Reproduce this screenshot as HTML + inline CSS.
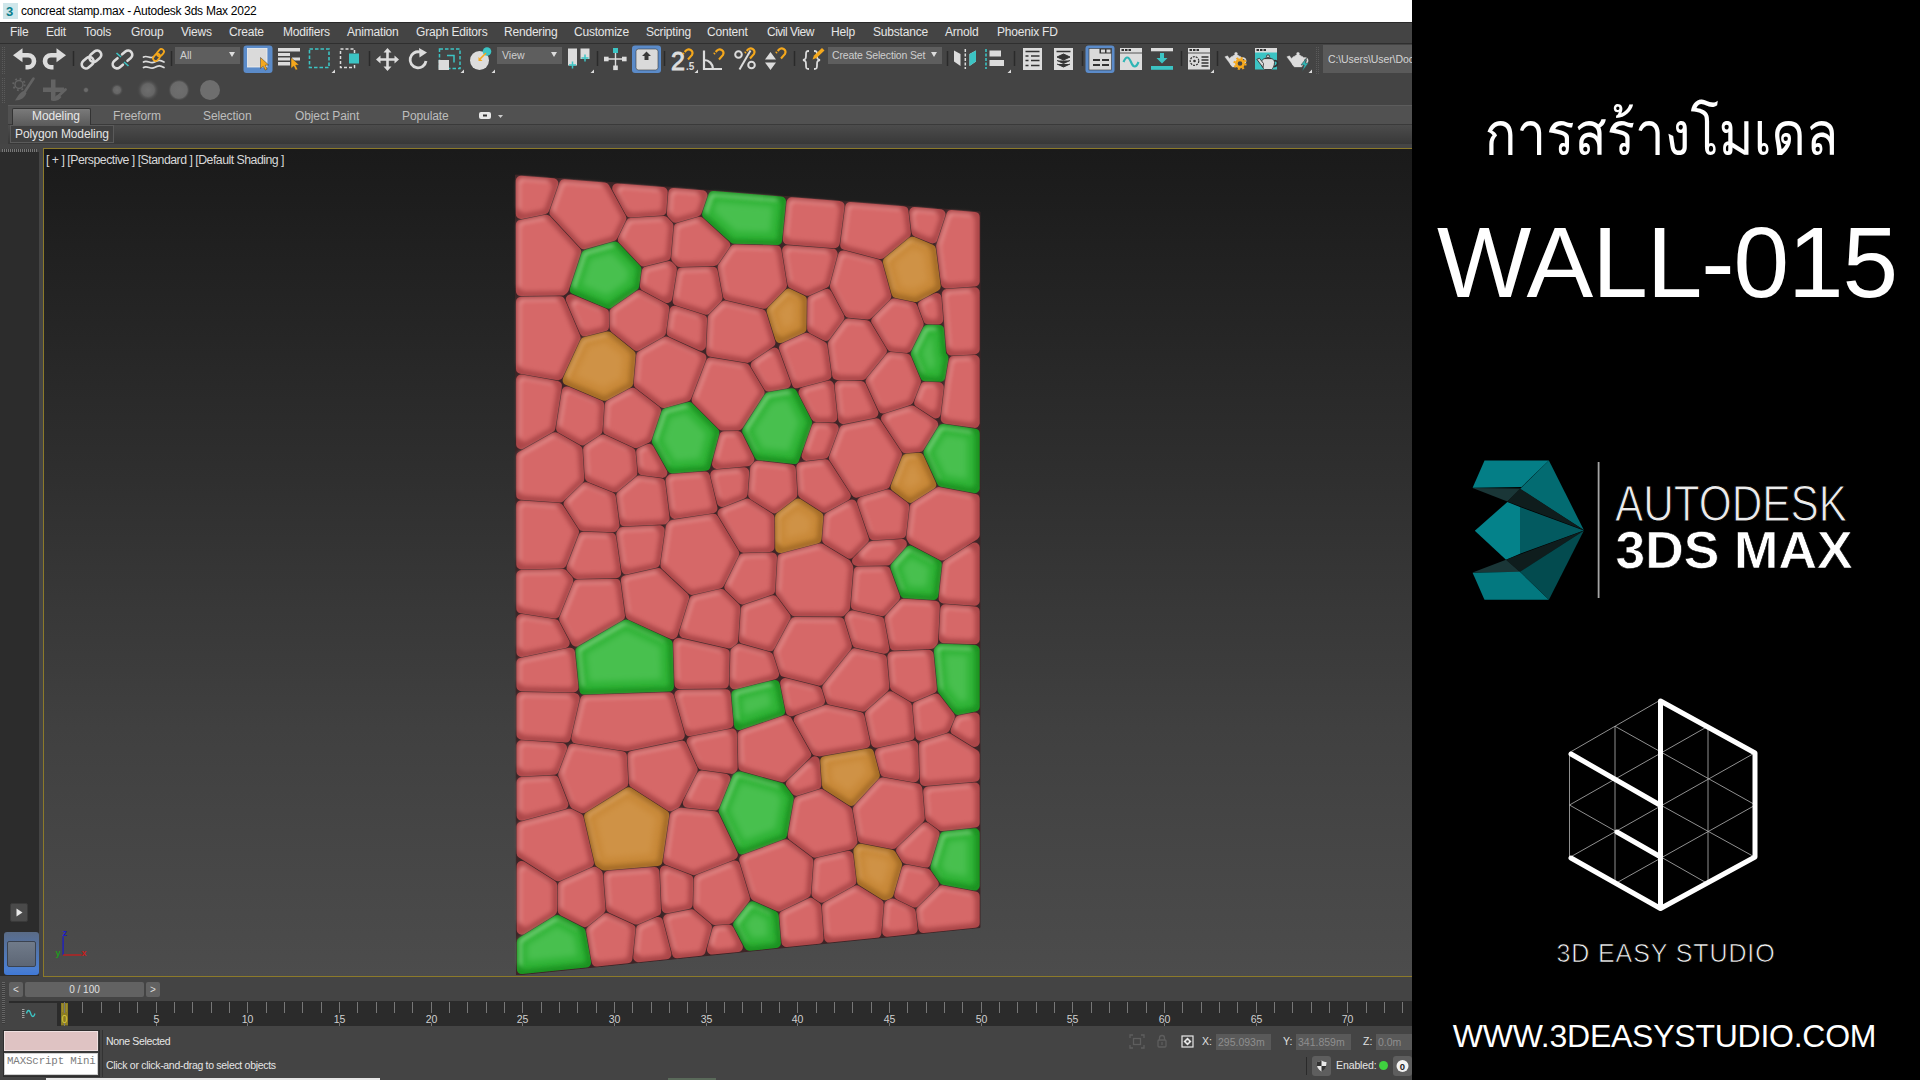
<!DOCTYPE html>
<html lang="th">
<head>
<meta charset="utf-8">
<title>concreat stamp.max - Autodesk 3ds Max 2022</title>
<style>
*{box-sizing:border-box;margin:0;padding:0}
html,body{width:1920px;height:1080px;overflow:hidden;background:#444;font-family:"Liberation Sans","DejaVu Sans",sans-serif;}
#app{position:absolute;left:0;top:0;width:1412px;height:1080px;background:#444444;overflow:hidden}
.abs{position:absolute}
#title{position:absolute;left:0;top:0;width:1412px;height:22px;background:#fff;color:#000;font-size:12px;line-height:22px;white-space:nowrap;letter-spacing:-0.27px}
#title span{position:absolute;left:21px;top:0}
#menubar{position:absolute;left:0;top:22px;width:1412px;height:22px;background:#444;border-top:1px solid #2a2a2a;border-bottom:1px solid #2f2f2f}
#menubar span{position:absolute;top:0;font-size:12px;line-height:19px;color:#e6e6e6;white-space:nowrap;letter-spacing:-0.2px}
#tb1{position:absolute;left:0;top:44px;width:1412px;height:32px;background:#444}
#tb2{position:absolute;left:0;top:76px;width:1412px;height:29px;background:#444}
#ribbon{position:absolute;left:8px;top:105px;width:1404px;height:20px;background:#515151;border-top:1px solid #5c5c5c;border-bottom:1px solid #3a3a3a}
#ribbon span{position:absolute;top:0;font-size:12px;line-height:20px;color:#bdbdbd;white-space:nowrap;letter-spacing:-0.1px}
#ribbon2{position:absolute;left:8px;top:125px;width:1404px;height:19px;background:linear-gradient(#4c4c4c,#383838)}
#leftp{position:absolute;left:0;top:152px;width:39px;height:824px;background:#2c2c2c}
#vp{position:absolute;left:43px;top:148px;width:1375px;height:829px;border:1.5px solid #8c7a2a;background:linear-gradient(#1a1a1a 0%,#1c1c1c 4%,#2f2f2f 40%,#404040 70%,#4c4c4c 100%);overflow:hidden}
#vplabel{position:absolute;left:2px;top:4px;font-size:12.300px;color:#d8d8d8;white-space:nowrap;letter-spacing:-0.5px}
#side{position:absolute;left:1412px;top:0;width:508px;height:1080px;background:#000;color:#fff}
.dd{position:absolute;background:#5e5e5e;color:#cfcfcf;font-size:10.5px;line-height:15px;padding-left:5px;white-space:nowrap;overflow:hidden}
.dd:after{content:"";position:absolute;right:5px;top:5px;border:3.5px solid transparent;border-top:5px solid #ddd}
</style>
</head>
<body>
<div id="app">
<div id="title"><svg class="abs" style="left:3px;top:3px" width="15" height="16" viewBox="0 0 15 16"><rect x="0" y="0" width="15" height="16" fill="#cfe6ea"/><text x="3" y="13" font-family="Liberation Sans,sans-serif" font-weight="bold" font-size="13" fill="#0b7f8c">3</text></svg><span>concreat stamp.max - Autodesk 3ds Max 2022</span></div>
<div id="menubar">
<span style="left:10px">File</span><span style="left:46px">Edit</span><span style="left:84px">Tools</span><span style="left:131px">Group</span><span style="left:181px">Views</span><span style="left:229px">Create</span><span style="left:283px">Modifiers</span><span style="left:347px">Animation</span><span style="left:416px">Graph Editors</span><span style="left:504px">Rendering</span><span style="left:574px">Customize</span><span style="left:646px">Scripting</span><span style="left:707px">Content</span><span style="left:767px;letter-spacing:-0.5px">Civil View</span><span style="left:831px">Help</span><span style="left:873px">Substance</span><span style="left:945px">Arnold</span><span style="left:997px">Phoenix FD</span>
</div>
<div id="tb1"><svg class="abs" style="left:0;top:0" width="1412" height="32" viewBox="0 44 1412 32" fill="none">
<g stroke="#2a2a2a" stroke-width="1.5"><path d="M73.500 51v15M171.500 51v15M369.500 51v15M597.500 51v15M664.500 51v15M794.500 51v15M947.500 51v15M1014.500 51v15M1082.500 51v15M1181.500 51v15M1217.500 51v15"/></g>
<path d="M2.500 47v27M4.500 47v27" stroke="#5a5a5a" stroke-width="1" stroke-dasharray="1 1"/>
<path d="M1318.500 47v27M1316.500 47v27" stroke="#5a5a5a" stroke-width="1" stroke-dasharray="1 1"/>
<!-- undo -->
<path d="M21.500 55.200h6.500a6 6 0 0 1 0 12h-2.500" stroke="#dcdcdc" stroke-width="4.600" fill="none"/><path d="M13 55.200l9.500-7v14z" fill="#dcdcdc"/>
<!-- redo -->
<path d="M57.500 55.200h-6.500a6 6 0 0 0 0 12h2.500" stroke="#dcdcdc" stroke-width="4.600" fill="none"/><path d="M66 55.200l-9.500-7v14z" fill="#dcdcdc"/>
<!-- link -->
<g stroke="#dcdcdc" stroke-width="2.600" stroke-linecap="round">
<g transform="translate(91.500 59.500) rotate(-40)"><rect x="-11.500" y="-4.200" width="13" height="8.400" rx="4.200"/><rect x="-1.500" y="-4.200" width="13" height="8.400" rx="4.200"/></g>
<g transform="translate(122.500 59.500) rotate(-40)"><path d="M-3 -4.200h-4.300a4.200 4.200 0 0 0 0 8.400h4.300M3 -4.200h4.300a4.200 4.200 0 0 1 0 8.400h-4.300"/></g>
</g>
<path d="M116.500 53l4.500 4M124 62l4.500 4" stroke="#3cc4c4" stroke-width="1.600"/>
<!-- bind -->
<g stroke="#dcdcdc" stroke-width="1.700" stroke-linecap="round"><path d="M143.500 57c4-2 6 2 10 0M143.500 62c4-2.500 7 2.500 11 0s6-2 9.500 0M143.500 67.500c4-2.500 7 2.500 11 0s6-2 9.500 0"/></g>
<g stroke="#f5a81c" stroke-width="1.800" transform="translate(158.500 55) rotate(-50)"><rect x="-7" y="-2.600" width="8" height="5.200" rx="2.600"/><rect x="-1" y="-2.600" width="8" height="5.200" rx="2.600"/></g>
<!-- select object -->
<rect x="243.500" y="45.500" width="29" height="27.500" rx="3" fill="#5b8bc9"/>
<rect x="247.500" y="48.500" width="19.500" height="18.500" fill="#dadada" stroke="#f0f0f0" stroke-width="0.800"/>
<path d="M260.500 57.500l0 11 2.700-2.300 2 4 2-1-2-4 3.500-0.200z" fill="#f5a81c" stroke="#3a3a3a" stroke-width="0.500"/>
<!-- select by name -->
<path d="M278 48h22v3.500h-22zM278 53h12v3h-12zM278 57.500h12v3h-12zM278 62h12v3.500h-12zM292 57.500h8v3h-8z" fill="#dcdcdc"/>
<path d="M291 57.500l0 11 2.700-2.300 2 4 2-1-2-4 3.500-0.200z" fill="#f5a81c" stroke="#3a3a3a" stroke-width="0.500"/>
<!-- rect region -->
<rect x="309.500" y="49" width="19.500" height="18.500" stroke="#3cc4c4" stroke-width="1.600" stroke-dasharray="3.500 2"/>
<path d="M335 69.500v3.500h-3.500z" fill="#dcdcdc"/>
<!-- window crossing -->
<rect x="340.500" y="49" width="14" height="18.500" stroke="#dcdcdc" stroke-width="1.500" stroke-dasharray="3 2"/>
<rect x="349" y="53.500" width="10" height="10" fill="#3cc4c4"/>
<!-- move -->
<path d="M387.500 48l4 4.500h-2.700v5.700h5.700v-2.700l4.500 4-4.500 4v-2.700h-5.700v5.700h2.700l-4 4.500-4-4.500h2.700v-5.700h-5.700v2.700l-4.500-4 4.500-4v2.700h5.700v-5.700h-2.700z" fill="#dcdcdc"/>
<!-- rotate -->
<path d="M426 61a8 8 0 1 1-6-9" stroke="#dcdcdc" stroke-width="2.800"/>
<path d="M419 48l8 4.500-7.500 5z" fill="#dcdcdc"/>
<!-- scale -->
<rect x="439.500" y="49" width="20.500" height="19.500" stroke="#3cc4c4" stroke-width="1.500" stroke-dasharray="3.500 2"/>
<path d="M447 55.500h7v7" stroke="#3cc4c4" stroke-width="1.500"/>
<rect x="438.500" y="60" width="10.500" height="10" fill="#dcdcdc"/>
<path d="M464 69.500v3.500h-3.500z" fill="#dcdcdc"/>
<!-- place -->
<circle cx="479.500" cy="60.500" r="9.500" fill="#dcdcdc"/>
<circle cx="487" cy="51.500" r="4.300" fill="#3cc4c4"/>
<path d="M486 53l-6 6" stroke="#f5a81c" stroke-width="1.600"/><path d="M478.500 57v4h4z" fill="#f5a81c"/>
<path d="M495 69.500v3.500h-3.500z" fill="#dcdcdc"/>
<!-- pivot -->
<path d="M568 48.500h9v17h-9zM580.500 48.500h9v10.500h-9z" fill="#dcdcdc"/>
<path d="M572.500 61.500v7M569 65h7M585 54.500v7M581.500 58h7" stroke="#3cc4c4" stroke-width="1.500"/>
<path d="M594 69.500v3.500h-3.500z" fill="#dcdcdc"/>
<!-- manipulate -->
<path d="M615.500 52v17M606 59h19" stroke="#dcdcdc" stroke-width="1.400"/>
<rect x="613" y="48" width="5" height="5" fill="#3cc4c4"/><rect x="604" y="56.700" width="4.600" height="4.600" fill="#dcdcdc"/><rect x="622" y="56.700" width="4.600" height="4.600" fill="#dcdcdc"/><rect x="613.200" y="65.500" width="4.600" height="4.600" fill="#dcdcdc"/>
<!-- keyboard override -->
<rect x="632" y="45.500" width="29" height="27.500" rx="3" fill="#5b8bc9"/>
<rect x="636" y="49" width="22" height="21" rx="2.500" fill="#dadada" stroke="#3a3a3a" stroke-width="0.600"/>
<path d="M646.500 51.500l4.500 4.500h-2.500v4h-4v-4h-2.500z" fill="#3a3a3a"/>
<!-- snaps -->
<text x="671" y="69.500" font-family="Liberation Sans,sans-serif" font-size="25" fill="#dcdcdc" stroke="#dcdcdc" stroke-width="1">2</text>
<text x="686" y="69.500" font-family="Liberation Sans,sans-serif" font-size="10" font-weight="bold" fill="#dcdcdc">.5</text>
<path d="M683 54l3-3.500a3.800 3.800 0 0 1 6 4.500l-4 4.500" stroke="#f5a81c" stroke-width="2.100" stroke-dasharray="1.300 1.300 30"/>
<path d="M698 69.500v3.500h-3.500z" fill="#dcdcdc"/>
<path d="M704 50.500v18.500h18M704 60a9 9 0 0 1 9 9" stroke="#dcdcdc" stroke-width="2.200"/>
<path d="M714 54l3-3.500a3.800 3.800 0 0 1 6 4.500l-4 4.500" stroke="#f5a81c" stroke-width="2.100" stroke-dasharray="1.300 1.300 30"/>
<circle cx="738.500" cy="54.500" r="3.300" stroke="#dcdcdc" stroke-width="2"/><circle cx="751.500" cy="65" r="3.300" stroke="#dcdcdc" stroke-width="2"/><path d="M739.500 69.500l11-19" stroke="#dcdcdc" stroke-width="2"/>
<path d="M745 53l3-3.500a3.800 3.800 0 0 1 6 4.500l-4 4.500" stroke="#f5a81c" stroke-width="2.100" stroke-dasharray="1.300 1.300 30"/>
<path d="M765 59.500l5.500-7.500 5.500 7.500zM765 62.500l5.500 7.500 5.500-7.500z" fill="#dcdcdc"/>
<path d="M776 53l3-3.500a3.800 3.800 0 0 1 6 4.500l-4 4.500" stroke="#f5a81c" stroke-width="2.100" stroke-dasharray="1.300 1.300 30"/>
<!-- named sel -->
<path d="M809 51c-3 0-3 1-3 4s0 4.500-3 5c3 0.500 3 2 3 5s0 4 3 4M814 51c3 0 3 1 3 4s0 4.500 3 5c-3 0.500-3 2-3 5s0 4-3 4" stroke="#dcdcdc" stroke-width="1.800"/>
<path d="M812.500 59.500l1.500-4 8-7.500 2.500 2.500-8 7.500z" fill="#f5a81c"/>
<!-- mirror -->
<path d="M954 50.500l6.500 3.500v12l-6.500-4.500zM976 50.500l-6.500 3.500v12l6.500-4.500z" fill="#dcdcdc"/><path d="M976 50.500l-6.500 3.500v12l6.500-4.500z" fill="#3cc4c4"/>
<path d="M965.300 49v20" stroke="#dcdcdc" stroke-width="1.500" stroke-dasharray="3 1.500"/>
<!-- align -->
<path d="M986 49v20" stroke="#3cc4c4" stroke-width="1.600" stroke-dasharray="3 1.500"/>
<rect x="989.500" y="50.500" width="11.500" height="6" fill="#dcdcdc"/><rect x="989.500" y="60" width="14.500" height="6" fill="#dcdcdc"/>
<path d="M1011 69.500v3.500h-3.500z" fill="#dcdcdc"/>
<!-- scene explorer -->
<rect x="1023" y="48" width="19" height="22" fill="#dcdcdc"/>
<path d="M1025.500 51.500h14M1025.500 56h3M1031 56h8.500M1025.500 60.500h3M1031 60.500h8.500M1025.500 65.500h3M1031 65.500h8.500" stroke="#333" stroke-width="1.500"/>
<!-- layer explorer -->
<rect x="1054" y="48" width="19" height="22" fill="#dcdcdc"/>
<path d="M1056.500 51.500h14" stroke="#333" stroke-width="1.500"/>
<path d="M1063.500 54l6.500 3-6.500 3-6.500-3zM1057 60.500l6.500 3 6.500-3M1057 64l6.500 3 6.500-3" fill="#333" stroke="#333" stroke-width="1"/>
<!-- ribbon toggle -->
<rect x="1085.500" y="45.500" width="29" height="27.500" rx="3" fill="#5b8bc9"/>
<rect x="1089" y="48.500" width="22.500" height="21.500" fill="#dadada" stroke="#333" stroke-width="0.600"/>
<path d="M1099.500 48.500h12v5h-12z" fill="#333"/><rect x="1101" y="49.500" width="4" height="3" fill="#dadada"/><rect x="1106.500" y="49.500" width="4" height="3" fill="#dadada"/>
<path d="M1093 60h7M1102 60h7M1093 65h7M1102 65h7" stroke="#333" stroke-width="1.800"/>
<!-- curve editor -->
<rect x="1120" y="48" width="22" height="22" fill="#dcdcdc"/><path d="M1120 48h22v4.500h-22z" fill="#dcdcdc"/>
<path d="M1121.500 50h2.500M1125 50h2.500M1128.500 50h2.500" stroke="#333" stroke-width="2.200"/><path d="M1120 53h22" stroke="#333" stroke-width="0.800"/>
<path d="M1123.500 62c2.500-6 5-6 7.500 0s5 6 7.500 0" stroke="#2fb5b5" stroke-width="2.200"/>
<!-- schematic -->
<rect x="1151" y="48" width="22" height="3.300" fill="#dcdcdc"/><rect x="1151" y="66" width="22" height="3.800" fill="#3cc4c4"/>
<path d="M1160 53h4v5h3.500l-5.500 5.500-5.500-5.500h3.500z" fill="#3cc4c4"/>
<!-- render setup-ish window -->
<rect x="1188" y="48" width="22" height="21.500" fill="#dcdcdc"/>
<path d="M1189.500 50h2.500M1193 50h2.500M1196.500 50h2.500" stroke="#333" stroke-width="2.200"/><path d="M1188 53h22" stroke="#333" stroke-width="0.800"/>
<circle cx="1194.500" cy="61" r="4.300" stroke="#333" stroke-width="1.200" stroke-dasharray="2 1"/><circle cx="1194.500" cy="61" r="1.300" fill="#333"/>
<path d="M1201.500 57h7M1201.500 60h7M1201.500 63h7M1201.500 66h7" stroke="#333" stroke-width="1.300"/>
<path d="M1214 69.500v3.500h-3.500z" fill="#dcdcdc"/>
<!-- teapots -->
<defs><g id="tp"><path d="M5 9.500C5 6 8 5.200 11.500 5.200S18 6 18 9.500C18 13 16.500 15.500 15 16.500H8C6.500 15.500 5 13 5 9.500Z"/><path d="M0.300 6.300L3 5.300L7 10.500L6.500 14.500Z"/><circle cx="11.500" cy="3.300" r="1.500"/><path d="M8.300 5.600Q11.500 2.800 14.700 5.600Z"/><path d="M17.500 7.800C22 6.800 22.500 12.500 17.300 13.800" fill="none" stroke-width="1.700"/></g></defs>
<use href="#tp" x="1224.500" y="50.500" fill="#dcdcdc" stroke="#dcdcdc" stroke-width="0.300"/>
<circle cx="1240" cy="63.500" r="3.600" stroke="#f5a81c" stroke-width="2.600" fill="#444"/><circle cx="1240" cy="63.500" r="5.600" stroke="#f5a81c" stroke-width="2" stroke-dasharray="2 2.400"/>
<rect x="1255" y="48" width="22" height="21.500" fill="#3cc4c4"/><rect x="1255" y="48" width="22" height="4.500" fill="#dcdcdc"/>
<path d="M1256.500 50h2.500M1260 50h2.500M1263.500 50h2.500" stroke="#333" stroke-width="2.200"/>
<use href="#tp" x="1256.500" y="53" fill="#dcdcdc" stroke="#333" stroke-width="0.900"/>
<use href="#tp" x="1286.500" y="50.500" fill="#dcdcdc" stroke="#dcdcdc" stroke-width="0.300"/>
<path d="M1306.500 58l-5.500 7h3.200l-2 6.500 6.300-8.500h-3.200z" fill="#2fb5b5" stroke="#444" stroke-width="0.600"/>
<path d="M1312 69.500v3.500h-3.500z" fill="#dcdcdc"/>
</svg>
<div class="dd" style="left:175px;top:3px;width:65px;height:17px;line-height:16px">All</div>
<div class="dd" style="left:497px;top:3px;width:65px;height:17px;line-height:16px">View</div>
<div class="dd" style="left:828px;top:3px;width:114px;height:17px;line-height:16px;padding-left:4px;letter-spacing:-0.15px">Create Selection Set</div>
<div class="abs" style="left:1323px;top:1px;width:89px;height:28px;background:#5a5a5a;color:#d4d4d4;font-size:10.5px;line-height:28px;padding-left:5px;white-space:nowrap;overflow:hidden;letter-spacing:-0.1px">C:\Users\User\Documents\3ds Max 2022</div>
</div>
<div id="tb2"><svg class="abs" style="left:0;top:0" width="1412" height="29" viewBox="0 76 1412 29" fill="none">
<defs>
<radialGradient id="bl1"><stop offset="0" stop-color="#6e6e6e"/><stop offset="0.550" stop-color="#656565"/><stop offset="1" stop-color="#444" stop-opacity="0"/></radialGradient>
<radialGradient id="bl2"><stop offset="0" stop-color="#6e6e6e"/><stop offset="0.750" stop-color="#6a6a6a"/><stop offset="1" stop-color="#444" stop-opacity="0"/></radialGradient>
</defs>
<path d="M2.500 78v25M4.500 78v25" stroke="#5a5a5a" stroke-width="1" stroke-dasharray="1 1"/>
<!-- gear brush -->
<circle cx="19" cy="84.500" r="4" stroke="#636363" stroke-width="1.500"/><circle cx="19" cy="84.500" r="5.800" stroke="#636363" stroke-width="1.800" stroke-dasharray="1.800 2.750"/>
<path d="M33.500 78.500l-9.500 14.500" stroke="#636363" stroke-width="2.600" stroke-linecap="round"/>
<path d="M23.500 91c-3 1-5 4-8.500 9.500 6 0 10-3 11.500-7.500z" fill="#636363"/>
<!-- plus brush -->
<path d="M51 79.500h4.500v8h8.500v4.500h-8.500v8.500h-4.500v-8.500h-8v-4.500h8z" fill="#636363"/>
<path d="M65.500 89.500l-6.500 6" stroke="#636363" stroke-width="2.800" stroke-linecap="round"/>
<path d="M58.500 94.500c-2.500 0.500-4.500 3-6.500 6.500 4.500 0.300 8-1.500 9.500-4z" fill="#636363"/>
<circle cx="86" cy="90" r="3.200" fill="url(#bl1)"/>
<circle cx="117" cy="90" r="6.500" fill="url(#bl1)"/>
<circle cx="148" cy="90" r="11.500" fill="url(#bl1)"/>
<circle cx="179" cy="90" r="11" fill="url(#bl2)"/>
<circle cx="210" cy="90" r="10" fill="#6e6e6e"/>
</svg>
</div>
<div id="ribbon">
<div class="abs" style="left:4px;top:2px;width:79px;height:18px;background:linear-gradient(#7a7a7a,#5a5a5a);border:1px solid #333;border-bottom:none;border-radius:2px 2px 0 0"></div>
<span style="left:24px;color:#e8e8e8">Modeling</span><span style="left:105px">Freeform</span><span style="left:195px">Selection</span><span style="left:287px">Object Paint</span><span style="left:394px">Populate</span>
<svg class="abs" style="left:470px;top:5px" width="30" height="10" viewBox="0 0 30 10"><rect x="1" y="1" width="12" height="7" rx="2" fill="#e8e8e8"/><rect x="5" y="3.5" width="4" height="2" fill="#333"/><path d="M20 4h5l-2.500 3z" fill="#ccc"/></svg>
</div>
<div id="ribbon2"><div class="abs" style="left:2px;top:0;width:104px;height:18px;border:1px solid #5a5a5a;background:#404040"></div><span class="abs" style="left:7px;top:0;font-size:12px;line-height:18px;color:#e4e4e4;white-space:nowrap;letter-spacing:-0.1px">Polygon Modeling</span></div>
<div class="abs" style="left:0;top:144px;width:1412px;height:4px;background:#454545"></div>
<div class="abs" style="left:2px;top:149px;width:35px;height:3px;background:repeating-linear-gradient(90deg,#777 0 1px,#333 1px 2px)"></div>
<div id="leftp"></div>
<div id="vp">
<div id="vplabel">[ + ] [Perspective ] [Standard ] [Default Shading ]</div>
<svg class="abs" style="left:0;top:0" width="1372" height="826" viewBox="0 0 1372 826">
<defs><filter id="b1" x="-5%" y="-5%" width="110%" height="110%"><feGaussianBlur stdDeviation="2"/></filter><filter id="b2" x="-5%" y="-5%" width="110%" height="110%"><feGaussianBlur stdDeviation="3"/></filter><filter id="b0" x="-5%" y="-5%" width="110%" height="110%"><feGaussianBlur stdDeviation="0.5"/></filter>
<g id="fr">
<polygon points="480.7,60.2 497.3,56.9 504,37.8 480.7,36.0"/>
<polygon points="514.8,62.7 541.1,90.9 566,83.8 573,69.3 558.1,42.1 523,39.3"/>
<polygon points="580.1,43.9 588.6,59.5 613.7,57.9 614.5,46.6"/>
<polygon points="632.8,64.4 649.8,59.4 653.1,49.7 632.9,48.1 631.8,63.3"/>
<polygon points="751.1,57.5 748.1,87 787.4,90.1 791.2,60.7"/>
<polygon points="805.5,93.1 835.7,100.9 857.8,82.6 855.9,65.9 809.6,62.2"/>
<polygon points="874.6,67.3 876.1,80.1 886.1,84.3 891.3,68.7"/>
<polygon points="901.2,97.5 905.4,130.3 926.8,129 926.8,71.5 910.1,70.2"/>
<polygon points="480.8,79 480.8,138.2 516.6,137.7 527.8,103.6 501.1,74.9"/>
<polygon points="583.6,89.8 600.9,108.1 618.1,103.9 620.4,78.1 618.5,76.1 589.3,77.9"/>
<polygon points="636.3,107.9 637.4,109 668.1,108.2 676,96.5 654.6,77.2 638.5,81.9"/>
<polygon points="605.1,134.8 620.3,143 623.8,121.4 606.3,125.8"/>
<polygon points="638,149 661,156.3 669.4,147.7 665.5,126.6 641.5,127.3"/>
<polygon points="682.8,119.3 687.3,143.2 718.8,150.5 733.8,135.1 729.1,105.3 692.9,104.4"/>
<polygon points="747.7,105.5 752,132.1 763.3,137.5 777.5,131.3 783.6,108.3"/>
<polygon points="795.1,136.8 807.4,160.1 822.2,161.6 838,145.9 830.5,118.5 801.9,111.2"/>
<polygon points="772.2,153.7 772,177.4 780.5,181.9 790.8,168 781.1,149.8"/>
<polygon points="480.9,156.6 480.9,216.4 511.9,221.8 527.3,188.4 513.6,156.1"/>
<polygon points="534.2,157.6 542.8,177.7 556.1,174.4 556,166.8"/>
<polygon points="574.4,165.5 574.5,177.2 593.2,192.2 613.4,180.9 616,161.6 595.8,150.7"/>
<polygon points="631.9,181.2 653.3,190.9 654.1,173.4 633.9,167.0"/>
<polygon points="671.3,199.6 702.5,204.8 721.8,192 714.5,168.4 682.3,160.9 672.6,170.7"/>
<polygon points="598.8,233.2 620.2,249.8 639.6,244.6 652.5,210.7 622.3,197 601,208.9"/>
<polygon points="796.5,222 816.1,222.4 833.1,201.6 820.1,179.9 805.9,178.5 792.9,196.1"/>
<polygon points="837.2,172.6 849.8,193.7 860.6,194.8 870.5,174.8 865.6,161.6 851.3,158.7"/>
<polygon points="883.8,157.9 887,166.4 890,166.5 889.1,155.1"/>
<polygon points="907,148.7 911,197.5 926.8,196.7 926.8,147.4"/>
<polygon points="745,201 755.4,229.5 778.1,223.4 774.8,199.6 762.5,193.2"/>
<polygon points="717,217.3 726.5,233.3 736.5,231.6 728.5,209.6"/>
<polygon points="657.2,249.9 680,272.7 692.1,272.6 711,243.2 698.9,222.9 669.4,217.9"/>
<polygon points="831.2,233 841.1,254.7 861.7,248.1 867.8,232.5 859.7,213.2 848.3,212.0"/>
<polygon points="906,266.4 926.8,269.4 926.8,215.1 913.1,215.8 909.9,234.5"/>
<polygon points="879.9,252 888.5,257.6 890.4,242 883.9,241.8"/>
<polygon points="765.2,245.9 774.6,264.2 784,264.6 781.6,241.6"/>
<polygon points="799.9,240.5 802.6,265.5 823.8,261.2 814.4,240.7"/>
<polygon points="481,235.1 481,263.4 481,288.5 502.9,276.2 508.5,239.9"/>
<polygon points="538.3,286.9 549.8,279.3 551.1,258.6 525.9,247.9 521.3,277.2"/>
<polygon points="568.3,278.8 591.7,289.8 599.7,286.2 607.4,263.1 588.3,248.4 569.6,258.3"/>
<polygon points="678.2,310.6 700.2,308.6 691.5,291 683.4,291.1"/>
<polygon points="768.4,302.2 777.4,301.1 784.1,283 775.3,282.6"/>
<polygon points="794.3,308.4 814,339 838.4,332 848.6,305.8 830.6,278.6 803.3,284.2"/>
<polygon points="848.1,271.7 863.6,295.1 873,294.4 883.9,276.6 867.3,265.7"/>
<polygon points="481.1,342.2 514.4,344.5 531.3,328.3 529.7,303.2 511.2,292.7 481.1,309.6"/>
<polygon points="548.1,302.4 549.5,325.6 570,333.8 584.3,321.9 582.9,306 559.4,295.0"/>
<polygon points="601.3,305.6 602.4,317.8 611.2,319 603.2,304.8"/>
<polygon points="529.7,355.4 541.1,373.2 566.3,374.3 563.2,350.9 542.8,342.7"/>
<polygon points="581.4,348.2 584.1,368.2 616.4,366.7 612.8,337.8 596.7,335.6"/>
<polygon points="630.8,333.7 634.2,360.5 663.7,356 657.8,331.7"/>
<polygon points="676.2,329.3 680.7,347.7 694.9,342.2 696,327.5"/>
<polygon points="713.2,343.8 730.2,354.5 744.4,343.7 743.1,323.9 715.3,320.8 714.9,321.2"/>
<polygon points="761.4,321.7 762.8,342.8 780.4,354.1 796.2,345.4 779.5,319.4"/>
<polygon points="684.2,366.1 701.4,394.7 721.6,394.1 721.5,370.8 702.6,358.9"/>
<polygon points="787.2,388.8 804.9,399.7 815.4,389.3 805.8,361.2 788.7,370.5"/>
<polygon points="823.3,355.5 832.4,382.1 853.7,380.8 856.1,359.4 843.4,349.7"/>
<polygon points="871.4,387.6 871.8,388.2 898.1,402 926.8,383.9 926.8,353.2 895.8,347.2 874.5,360.6"/>
<polygon points="822.7,408 841.2,407.7 848.6,399.5 830,400.7"/>
<polygon points="907.1,418 904,445.9 926.8,447.6 926.8,405.7"/>
<polygon points="481.1,360.6 481.2,411.4 515,410.7 525.6,383.3 512.6,362.9"/>
<polygon points="532,417.9 534.6,421 567.7,420.3 563.7,392.6 542.1,391.7"/>
<polygon points="581.5,386.7 585.6,415.7 607.6,410.7 611.2,385.4"/>
<polygon points="625.6,414.8 648.9,436.6 672.6,431.2 685.8,404.5 667.5,374.1 630.8,379.6"/>
<polygon points="690.1,437.3 699.1,446 722.3,438.3 723.8,412.4 702.1,413.1"/>
<polygon points="740.5,442.2 752.5,458.4 795.5,458.7 797.3,456.7 800.4,419.5 799.4,417.9 776.1,403.6 742.2,412.5"/>
<polygon points="816.1,453.3 836.8,457.9 846.6,447.3 838.9,426.1 818.3,426.5"/>
<polygon points="481.2,429.8 481.2,455.9 508.5,460.2 519.9,432 517.3,429.1"/>
<polygon points="524.4,469.9 533.4,487 571.8,464.8 568.2,438.7 536.8,439.3"/>
<polygon points="586.2,434.4 590.2,463.4 626.3,479.9 635.7,449.5 613.1,428.4"/>
<polygon points="645.2,481.3 684,490.2 685.4,489.1 687.3,460.2 676.1,449.3 653.5,454.5"/>
<polygon points="704,487 724,492.6 737,468.3 727.8,455.9 705.5,463.3"/>
<polygon points="849.8,470.9 853.8,492.6 885,491.2 885.3,490.8 886.8,460.3 861,458.8"/>
<polygon points="904,485.5 926.8,486.2 926.8,466.1 905,464.5"/>
<polygon points="481.3,474.5 481.3,498.4 514.8,491.2 508.3,478.8"/>
<polygon points="481.3,517.2 481.3,533.5 525.2,534.4 522.6,508.4"/>
<polygon points="638.3,498.6 639.2,531.2 676.1,530.7 676.8,507.4"/>
<polygon points="694.5,530.2 725.1,522.5 721.4,510.9 696.3,504 695.2,504.8"/>
<polygon points="738.6,504.3 743.5,519.6 773.8,527.3 798.5,496.5 792.7,477.1 753.4,476.8"/>
<polygon points="810,470.8 816,490.6 835.5,494.8 832,475.7"/>
<polygon points="787.5,539.6 789.9,547.5 817.5,553.5 836.4,536.9 834.3,513.3 812.4,508.6"/>
<polygon points="852.6,511 854.7,535.3 868.7,543.7 883.8,537.3 881.1,509.8"/>
<polygon points="481.4,582 518.6,584.4 525.9,552.9 481.4,551.9"/>
<polygon points="544.3,554.8 537,586.3 582.7,593.2 630.9,583.2 622.1,552.2"/>
<polygon points="640.5,549.6 648.4,577.6 680.2,571.3 678.2,549.1"/>
<polygon points="746.2,539.3 749.8,557.3 771.3,549.6 770,545.3"/>
<polygon points="760.4,573 774.7,598.3 816.6,591.3 812.3,571.2 783.2,564.9"/>
<polygon points="830.2,566.8 835,589.2 861.5,583.4 859.3,559.5 847,552.1"/>
<polygon points="877.8,559.8 879.8,581.6 898.2,575.9 901.4,568.2 890.6,554.3"/>
<polygon points="916.6,579.7 926.8,586 926.8,573.2 918.6,574.8"/>
<polygon points="481.4,618.3 507,617 512.5,602.5 481.4,600.5"/>
<polygon points="523.4,625.8 533.8,652.4 538.6,654.7 575.3,632 574.1,610.5 531.6,604.1"/>
<polygon points="593.7,631.8 626.4,652.8 628.8,651.6 644.4,620.5 635.5,601.1 592.5,610.0"/>
<polygon points="653.1,595.4 660.8,612.3 684.7,615.6 684.2,589.3"/>
<polygon points="702.5,588.8 703.1,614.5 737.4,624 757.3,604.9 740.8,575.7"/>
<polygon points="752.3,635.2 753.8,637.2 768.2,632.7 767.4,620.8"/>
<polygon points="840.7,606.8 844.1,619.7 866.2,623.6 865.5,601.4"/>
<polygon points="883.8,599.6 884.7,627.9 926.8,624.2 926.8,607.6 903.8,593.4"/>
<polygon points="481.5,636.8 481.5,661.5 514.2,652.9 507.4,635.4"/>
<polygon points="649.9,650.6 668.1,652.5 675.9,633 659.8,630.7"/>
<polygon points="753,685.4 771.8,699.4 803.8,692.1 804.4,691.3 799.7,664.3 776.6,649.3 758.4,655.0"/>
<polygon points="817.9,661.7 822.1,686 847.5,690.9 871.7,667.8 869.7,642.9 840,637.7"/>
<polygon points="888.4,646 890.1,666.5 899.2,673.1 926.8,670.1 926.8,642.6"/>
<polygon points="481.5,680.6 481.5,702.1 514.3,722.9 540.4,711.4 531.1,671.6 525.6,668.9"/>
<polygon points="628.5,708.9 649.6,717 683.6,703.7 668,670.9 637.4,667.8 634.3,669.4"/>
<polygon points="862.1,702.3 864.6,706.3 879.1,709 886,686.2 882.1,683.4"/>
<polygon points="481.6,724 481.6,773.7 504.2,759.9 504.3,738.4"/>
<polygon points="522.7,739.3 522.6,759.4 540.3,768.5 552.6,758.7 550.1,727.2"/>
<polygon points="568.8,730.3 570.9,756.7 592.3,766.4 608.1,759.6 606.7,727.2"/>
<polygon points="551.4,783.2 555.8,808.2 579.9,805.7 582.4,782.1 563.5,773.6"/>
<polygon points="598.6,803.8 617.5,801.9 611.4,778.2 600.8,782.8"/>
<polygon points="625.1,727.3 626.3,754.6 639.9,752 640.3,733.1"/>
<polygon points="629,772.8 636,800 653.5,798.2 658.5,779.7 646.3,769.5"/>
<polygon points="658.2,755.4 672,767 683.1,766.2 696.7,748.9 688.4,721.6 658.7,733.2"/>
<polygon points="673.1,796.2 687.8,794.7 682.5,784.7 676.1,785.1"/>
<polygon points="705,713.1 714.5,744.1 734.6,753.2 758.2,741.8 760.2,713.7 741.4,699.7"/>
<polygon points="744.4,768.9 746,788.7 770.4,786.2 768.5,760 766.2,758.4"/>
<polygon points="776.5,743.2 777.9,744.1 803.1,730.2 801,711.6 778.4,716.8"/>
<polygon points="787,760.1 788.8,784.3 828.7,780.2 830.6,757.1 812.7,745.9"/>
<polygon points="847.4,778.3 864.4,776.6 863.1,765.9 848.9,758.9"/>
<polygon points="860,743.8 869.9,748.7 884.6,734.4 880.1,727.9 865.4,725.2"/>
<polygon points="881.3,763.3 882.7,774.7 926.8,770.2 926.8,750.6 899.6,745.5"/>
</g>
<g id="fg">
<polygon points="667.6,64.1 691.7,85.9 729.6,86.9 732.7,56 672,51.2"/>
<polygon points="535.7,138.3 564,150.2 586.6,134.7 588.3,121.5 569.7,101.9 545.4,108.8"/>
<polygon points="886.1,184.7 876.2,204.9 883.9,223.4 893,223.7 895.4,210.2 893.4,208.1 891.5,184.9"/>
<polygon points="617.1,292 630.2,315.3 658.4,313.2 666,284.7 643.8,262.5 625.4,267.5"/>
<polygon points="707.7,282.3 717.7,302.6 747.6,305.9 758.8,273.9 745.9,248.6 727.4,251.8"/>
<polygon points="888.8,303.9 900.4,329.4 926.8,334.4 926.8,288 900.8,284.2"/>
<polygon points="863.7,440.6 885.9,441.8 888.6,417.8 867,406.5 855.9,418.9"/>
<polygon points="540.6,504.1 543.8,536.4 620.9,533.9 619.8,497.2 582.3,480.0"/>
<polygon points="899,503.7 902.5,539.5 915.7,556.6 926.8,554.4 926.8,504.7"/>
<polygon points="696.6,548.7 698.6,570.7 731.5,559.5 727.8,540.8"/>
<polygon points="684.1,662 700,695.4 734.8,682.5 740.6,650.2 734.5,642.3 696.3,631.7"/>
<polygon points="895.6,718 902,727.3 926.8,731.9 926.8,688.6 903.7,691.1"/>
<polygon points="481.7,815.8 537.5,810.1 533.1,785.5 513.8,775.6 481.7,795.3"/>
<polygon points="698.8,776 707.5,792.7 727.7,790.6 726,769.5 709.7,762.1"/>
</g>
<g id="fo">
<polygon points="848.4,114.3 855.6,140.8 871,143.9 887.5,135.1 883.3,103.1 869.1,97.2"/>
<polygon points="732.1,163.2 738.5,183.8 753.6,177 753.8,153.4 745.6,149.4"/>
<polygon points="528.8,229.2 560.3,242.5 580.5,231.7 582.7,207.4 563.2,191.6 543.9,196.4"/>
<polygon points="856.4,336.4 866.4,344 882.3,334 872.7,312.9 865.4,313.4"/>
<polygon points="740,394 768.9,386.5 770.3,369.5 754.3,359.2 739.9,370.3"/>
<polygon points="786.8,634 806.6,646.8 826.5,625.2 822.2,609 785.4,615.4"/>
<polygon points="549.5,669.6 559.2,711.1 561.3,712.5 610,708.5 616,667.9 584.7,647.9"/>
<polygon points="818.6,704.1 821.6,729.8 841.4,741.9 848.9,715.9 844.7,709.1"/>
</g>
</defs>
<polygon points="471.5,26.0 936.0,63.0 936.0,778.5 472.5,826.0" fill="#3e2527" stroke="#3e2527" stroke-width="1" stroke-linejoin="round"/>
<g filter="url(#b0)" stroke-linejoin="round" stroke-width="10">
<g fill="#ac4749" stroke="#ac4749">
<polygon points="476.8,65 500.3,60.3 509.3,34.3 476.8,31.7"/>
<polygon points="510.4,63.6 539.9,95.3 568.8,87.1 577.4,69.2 560.5,38.4 520.3,35.2"/>
<polygon points="573.2,39.4 586.4,63.5 617.4,61.6 618.7,43.0"/>
<polygon points="629.3,43.9 627.8,64.7 631.6,68.8 652.8,62.6 658.4,46.2"/>
<polygon points="747.6,53.3 743.8,90.6 790.7,94.2 795.6,57.1"/>
<polygon points="801.2,96 836.6,105.1 861.9,84.3 859.4,62.2 806.2,58.0"/>
<polygon points="870.2,63.1 872.5,82.9 888.5,89.5 896.5,65.2"/>
<polygon points="897.2,97.1 902,134.4 930.7,132.6 930.7,67.9 907.4,66.0"/>
<polygon points="476.9,75.8 476.9,142.1 517.9,141.6 519.8,140.2 532.2,102.7 502.4,70.7"/>
<polygon points="578.9,90.5 599.7,112.5 621.8,107 624.4,76.7 620.1,72.1 586.8,74.1"/>
<polygon points="632.2,109.3 635.8,113 670.2,112 681.1,95.9 655.6,72.8 634.9,78.9"/>
<polygon points="600.9,137 623.3,149 627.9,120.1 625,117.1 602.8,122.6"/>
<polygon points="633.7,151.7 662.1,160.7 673.6,149 668.7,122.7 638.1,123.5"/>
<polygon points="678.7,118.4 683.9,146.4 720,154.8 738,136.4 732.4,101.5 690.9,100.4"/>
<polygon points="743.1,101.2 748.4,134.7 763.2,141.8 780.8,134.1 788.6,104.7"/>
<polygon points="790.9,137.3 805,163.8 823.6,165.6 842.3,147.1 833.6,115.3 799.2,106.4"/>
<polygon points="768.4,151.2 768.1,179.8 781.7,186.9 795.4,168.3 782.9,144.8"/>
<polygon points="477,152.7 477,219.7 514.2,226.2 531.6,188.5 516.1,152.2"/>
<polygon points="526.8,150.3 540.5,182.3 560,177.5 559.9,164.2"/>
<polygon points="570.5,163.4 570.6,179 592.8,196.9 617,183.4 620.3,159.4 595.5,146.1"/>
<polygon points="627.7,183.5 656.9,196.8 658.1,170.6 630.6,161.8"/>
<polygon points="667.2,202.9 703.4,208.9 726.4,193.7 717.5,165.2 681,156.6 668.8,169.0"/>
<polygon points="594.7,235 619.4,254.1 642.5,247.8 657.4,208.7 622.1,192.6 597.3,206.5"/>
<polygon points="793.1,225.9 817.9,226.3 837.9,201.9 822.4,176.2 804.1,174.4 788.8,195.1"/>
<polygon points="832.3,172 847.5,197.4 862.9,198.9 874.7,175 868.5,158.2 850,154.4"/>
<polygon points="879,156.1 884.2,170.2 894.2,170.5 892.5,148.9"/>
<polygon points="902.8,145 907.4,201.6 930.7,200.4 930.7,143.2"/>
<polygon points="740.1,199 752.9,234.2 782.5,226.3 778.4,197.1 762.6,188.8"/>
<polygon points="711.7,216.1 724.5,237.6 741.8,234.6 730.5,203.6"/>
<polygon points="652.7,250.9 678.4,276.6 694.2,276.4 715.6,243.3 701.3,219.3 666.9,213.6"/>
<polygon points="826.6,232.4 839,259.4 864.7,251.3 872,232.4 862.4,209.5 846.6,207.9"/>
<polygon points="901.7,269.7 930.7,273.9 930.7,211 909.7,212.1 906,234.0"/>
<polygon points="875.2,253.5 891.7,264.4 894.8,238.3 881.3,237.8"/>
<polygon points="759.5,243.4 772.1,268 788.4,268.6 785,236.6"/>
<polygon points="795.6,236.5 799.2,270.2 829.4,264.1 817,236.9"/>
<polygon points="477.1,230.5 477.1,263.4 477.1,295.2 506.4,278.7 513,236.8"/>
<polygon points="538.4,291.4 553.6,281.5 555.2,256.1 522.8,242.4 517.1,279.3"/>
<polygon points="564.2,281.2 591.6,294.1 602.8,289.1 612,261.8 588.7,243.7 565.8,255.9"/>
<polygon points="673,315 703.5,312.2 705.3,310.3 693.9,287.1 680.4,287.2"/>
<polygon points="762.6,306.9 780.2,304.7 789.7,279.3 772.5,278.6"/>
<polygon points="789.9,308.9 812.2,343.6 841.3,335.2 853,305.3 832.4,274.3 800.4,280.8"/>
<polygon points="842,269.6 861.6,299.2 875.3,298.1 889.2,275.5 867.9,261.4"/>
<polygon points="477.2,345.8 515.9,348.6 535.3,329.8 533.5,300.8 511.2,288.2 477.2,307.3"/>
<polygon points="544.1,300.4 545.8,328.3 570.7,338.3 588.4,323.6 586.6,303.4 559.1,290.5"/>
<polygon points="597.2,303.2 598.8,321.3 618.4,323.9 604.9,299.8"/>
<polygon points="524.7,354.8 538.9,377.1 569.1,378.3 570.5,376.4 566.8,348.2 541.9,338.2"/>
<polygon points="577.3,346.6 580.7,372.3 619.4,370.5 620.6,369.2 616.3,334.3 595.5,331.5"/>
<polygon points="626.6,331.3 630.8,364.9 668.5,359.3 660.9,327.5 627.6,330.1"/>
<polygon points="671.3,325.8 677.9,353 698.6,344.9 700.2,323.2"/>
<polygon points="709.1,345.9 730.4,359.3 748.4,345.5 746.8,320.4 713.8,316.7 711.2,319.6"/>
<polygon points="757.3,318.3 759,345 780.2,358.6 801.8,346.8 781.4,315.2"/>
<polygon points="678.5,364.2 699.2,398.7 725.5,397.9 725.4,368.7 703.1,354.6"/>
<polygon points="783.1,390.9 805.5,404.6 819.9,390.3 808,355.5 785,368.1"/>
<polygon points="818.2,352.9 829.7,386.2 857.2,384.5 860.3,357.6 844.2,345.4"/>
<polygon points="867.4,388.4 868.9,391.1 898.2,406.5 930.7,386.1 930.7,350 895,343.1 870.8,358.3"/>
<polygon points="813,412.1 842.9,411.6 857.9,395 828.3,396.9"/>
<polygon points="899.6,449.5 930.7,451.8 930.7,398.6 903.5,415.7"/>
<polygon points="477.2,356.4 477.3,415.4 517.7,414.5 530,382.8 514.8,359.1"/>
<polygon points="527.5,418.7 532.9,424.9 572.2,424.1 567.1,388.8 539.5,387.7"/>
<polygon points="577.3,385.1 582.3,420.4 611.1,413.9 615.7,381.3 578.8,382.9"/>
<polygon points="621.4,416.3 647.8,440.9 675.3,434.6 690.3,404.3 669.5,369.8 628.8,375.9 626.8,378.1"/>
<polygon points="685.4,438.1 698.1,450.5 726.1,441.1 728,408.4 699.6,409.3"/>
<polygon points="736.6,443.4 750.6,462.3 797.2,462.6 801.1,458.4 804.3,418.6 802.3,415.1 776.7,399.4 738.5,409.4"/>
<polygon points="811.9,456.4 838.1,462.2 851.1,448.2 841.6,422.2 814.7,422.6"/>
<polygon points="477.3,426 477.3,459.2 511,464.5 524.4,431.3 519,425.1"/>
<polygon points="520.1,470.1 531.9,492.5 576,466.9 571.6,434.7 534.1,435.5"/>
<polygon points="581.9,431.4 586.6,466.1 628.3,485.1 628.9,484.7 640.2,448.3 614.2,424.1"/>
<polygon points="640.2,484.1 684.9,494.4 689.2,491.2 691.3,458.6 677.3,445 650.4,451.1"/>
<polygon points="699.9,490 726,497.2 741.6,468 729.2,451.3 701.8,460.4"/>
<polygon points="845.6,469.7 850.6,496.6 886.9,495 889.1,492.3 890.9,456.7 859.4,454.8"/>
<polygon points="899.9,489.2 930.7,490.3 930.7,462.4 901.3,460.3"/>
<polygon points="477.4,470 477.4,503.2 520.7,494 510.9,475.2"/>
<polygon points="477.4,514 477.4,537.3 529.5,538.4 526,503.7"/>
<polygon points="634.2,493.9 635.5,535.1 679.9,534.6 680.7,504.3"/>
<polygon points="690.5,535.3 730.1,525.3 724.5,507.8 695.5,499.7 691.4,502.8"/>
<polygon points="734.4,503.9 740.4,522.9 775.3,531.7 802.9,497.3 795.6,473.2 751,472.9"/>
<polygon points="805.5,469.3 812.9,493.9 840.4,499.8 835.4,472.4 808.1,466.4"/>
<polygon points="783.2,538.8 786.8,550.8 818.6,557.7 840.4,538.5 837.9,510.1 810.8,504.3"/>
<polygon points="848.4,507.6 851,537.6 868.4,548 887.9,539.7 884.6,505.7"/>
<polygon points="477.5,547.9 477.5,585.7 521.7,588.5 530.7,549.1"/>
<polygon points="541.2,551 532.3,589.5 582.8,597.2 635.8,586.2 625.1,548.2"/>
<polygon points="635.4,545.7 645.7,582.1 684.4,574.5 681.7,545.2"/>
<polygon points="741.2,534 746.7,562 747.3,562.3 776.1,552 773.1,542.1"/>
<polygon points="754.7,570.9 772.2,601.8 775.6,602.4 821.3,594.4 815.6,568 783,560.8"/>
<polygon points="825.9,565.4 832,593.8 865.7,586.5 863,557.1 846.5,547.3"/>
<polygon points="873.6,557.3 876.3,586.8 901.1,579.1 905.9,567.6 891.9,549.6"/>
<polygon points="911.7,581.3 930.7,592.9 930.7,568.4 915.8,571.4"/>
<polygon points="477.5,622.5 509.8,620.8 518,598.9 477.5,596.3"/>
<polygon points="519.2,625.8 530.7,655.2 538.8,659.2 579.3,634.1 577.9,607.1 529,599.8"/>
<polygon points="589.9,634 626.2,657.3 631.7,654.5 648.7,620.6 637.8,596.6 588.5,606.8"/>
<polygon points="647.6,592.5 658.2,615.9 687.4,619.9 688.7,619 687.9,584.6"/>
<polygon points="698.6,586.1 699.3,617.5 738.5,628.3 762.2,605.6 743.2,572 741.7,571.3"/>
<polygon points="747.1,634.8 752.3,641.7 772.4,635.5 770.7,612.3"/>
<polygon points="835.9,603.9 840.9,623.1 870.2,628.2 869.2,596.6"/>
<polygon points="879.9,596.8 880.9,632.1 930.7,627.7 930.7,605.4 904.3,589.2"/>
<polygon points="477.6,633.1 477.6,666.6 519.4,655.5 510,631.4"/>
<polygon points="643.8,653.9 670.6,656.6 681.4,629.8 657.6,626.5"/>
<polygon points="748.7,687 771,703.7 805.9,695.6 808.5,692.4 803.3,662 777.2,645.1 755,652.0"/>
<polygon points="813.8,660.4 818.7,689.3 848.7,695.1 875.8,669.3 873.3,639.9 873,639.5 838.6,633.4"/>
<polygon points="884.2,642.5 886.3,668.6 898.1,677.1 930.7,673.6 930.7,638.4"/>
<polygon points="477.6,677.6 477.6,704.3 513.9,727.3 544.9,713.7 534.5,668.9 526,664.7"/>
<polygon points="624.2,711.4 649.7,721.2 688.9,705.8 670.5,667.3 636.7,663.8 630.8,666.9"/>
<polygon points="857.2,701.7 862.2,709.8 881.8,713.5 890.5,684.7 881.7,678.3"/>
<polygon points="477.7,716.9 477.7,780.7 508.1,762.1 508.2,736.2"/>
<polygon points="518.8,736.8 518.7,761.8 540.8,773.1 556.6,760.5 553.8,724.9 550.5,722.8"/>
<polygon points="564.6,726.8 567.2,759.3 592.3,770.6 612.1,762.2 610.4,723.0"/>
<polygon points="547.2,781.6 552.6,812.5 583.4,809.3 586.5,779.7 562.9,769.0"/>
<polygon points="594.2,808.2 622.4,805.3 614.1,772.9 597.1,780.1"/>
<polygon points="620.9,721.5 622.6,759.3 643.7,755.2 644.3,730.5"/>
<polygon points="624.2,769.8 633.1,804.2 656.6,801.8 662.9,778.3 647.4,765.3"/>
<polygon points="654.2,757.2 670.7,771 685.1,769.9 701,749.7 690.9,716.4 654.9,730.5"/>
<polygon points="667.9,800.6 693.9,798 684.8,780.6 673.1,781.5"/>
<polygon points="700.2,710.8 711.2,746.9 734.7,757.5 761.9,744.3 764.3,711.9 742,695.3"/>
<polygon points="740.3,766.5 742.5,793 774.6,789.7 772.3,757.9 766.5,753.9"/>
<polygon points="772.5,745.1 777.7,748.7 807.3,732.3 804.3,706.8 774.8,713.7"/>
<polygon points="782.9,757.9 785.2,788.6 832.4,783.8 834.7,755.1 812.8,741.4"/>
<polygon points="843.1,782.7 868.7,780.1 866.7,763.3 848.8,754.5 845.3,755.9"/>
<polygon points="855.3,745.9 870.7,753.5 889.7,734.9 882.4,724.3 862.6,720.7"/>
<polygon points="877.2,761.8 879.3,779 930.7,773.7 930.7,747.4 898.3,741.3"/>
</g>
<g fill="#1d9424" stroke="#1d9424">
<polygon points="663.1,65.3 690.2,89.8 733.1,90.9 737,52.5 669.3,47.1"/>
<polygon points="530.9,140.5 564.5,154.7 590.2,136.9 592.4,120.2 570.9,97.5 542.4,105.7"/>
<polygon points="883.7,180.8 871.9,204.7 881.3,227.2 896.3,227.7 899.5,208.9 897.2,206.4 895.1,181.1"/>
<polygon points="612.9,292.4 628,319.4 661.5,316.8 670.4,283.6 644.9,258.1 622.3,264.2"/>
<polygon points="703.2,282.1 715.2,306.2 750.2,310.1 763.1,273.6 748.1,244.3 725,248.2"/>
<polygon points="884.4,303.6 897.7,332.8 930.7,339.2 930.7,284.7 898.9,280.0"/>
<polygon points="861,444.3 889.4,445.9 892.8,415.6 866.2,401.7 851.4,418.0"/>
<polygon points="536.5,502 540.3,540.4 624.9,537.6 623.7,494.7 582.1,475.6"/>
<polygon points="896.8,499.8 894.9,501.9 898.7,541 914.1,560.9 930.7,557.6 930.7,500.9"/>
<polygon points="692.4,545.7 695.1,576.1 736,562 730.8,536.0"/>
<polygon points="679.8,662.1 698,700.3 738.2,685.4 744.7,649.2 736.8,638.9 695.2,627.4 693.2,628.8"/>
<polygon points="891.4,718.6 899.7,730.8 930.7,736.6 930.7,684.2 900.7,687.5"/>
<polygon points="477.8,820.1 542.1,813.5 536.6,782.9 513.6,771.1 477.8,793.1"/>
<polygon points="694.2,775.6 705.3,796.8 731.9,794.1 729.7,766.9 708.5,757.3"/>
</g>
<g fill="#a56c26" stroke="#a56c26">
<polygon points="843.9,112.9 852.5,144.1 871.6,148 891.7,137.3 886.9,100.3 868.5,92.7"/>
<polygon points="727.7,162.1 736.1,189.1 757.5,179.5 757.8,151 744.7,144.7"/>
<polygon points="523.6,231.2 560.5,246.8 584.2,234.1 586.7,205.6 564.1,187.4 541.1,193.1"/>
<polygon points="851.7,337.8 866.2,348.8 887.2,335.5 875.1,308.8 862.7,309.7"/>
<polygon points="736,368.3 736.2,399.1 772.6,389.6 774.4,367.5 754.1,354.5"/>
<polygon points="783,636.2 807.2,651.9 830.8,626.3 825.1,604.5 781.3,612.1"/>
<polygon points="545.1,667.7 555.7,713.5 560.3,716.5 613.4,712.1 620.2,666 584.7,643.3"/>
<polygon points="814.4,701.9 817.9,732.1 840.7,746.3 844.6,744.8 853.1,715.4 847.1,705.6 816.3,699.7"/>
</g>
</g>
<g filter="url(#b1)" stroke-linejoin="round" stroke-width="9">
<use href="#fr" fill="#ee9a98" stroke="#ee9a98" transform="translate(-2.300 -2.300)"/>
<use href="#fg" fill="#86e08a" stroke="#86e08a" transform="translate(-2.300 -2.300)"/>
<use href="#fo" fill="#e0aa66" stroke="#e0aa66" transform="translate(-2.300 -2.300)"/>
<use href="#fr" fill="#d66868" stroke="#d66868" transform="translate(-0.300 -0.300)"/>
<use href="#fg" fill="#2fb235" stroke="#2fb235" transform="translate(-0.300 -0.300)"/>
<use href="#fo" fill="#c88839" stroke="#c88839" transform="translate(-0.300 -0.300)"/>
</g>
<g filter="url(#b2)" stroke-linejoin="round" stroke-width="3" opacity="0.300">
<g fill="#86e08a" stroke="#86e08a">
<polygon points="671,62 692.2,81.1 725.2,82 727.5,58.5 673.6,54.2"/>
<polygon points="539.4,135.2 562.6,144.9 582,131.5 583.3,121.8 567.5,105.2 547.4,110.9"/>
<polygon points="887.1,188.4 879.4,204 885.5,218.7 888.9,218.8 890.3,210.4 888.7,208.7"/>
<polygon points="620.3,290.6 631.3,310.4 654.5,308.6 660.8,284.9 641.7,265.7 627.3,269.6"/>
<polygon points="711.1,281.6 719.2,298 744,300.8 753.7,273.1 742.8,251.8 728.7,254.3"/>
<polygon points="892.1,303.1 902,325 922,328.8 922,290.3 901.8,287.3"/>
<polygon points="865.5,435.9 881.5,436.8 883.6,419 866.9,410.3 859.2,418.8"/>
<polygon points="546.3,531.5 616,529.2 615.1,498.7 581.5,483.3 543.7,505.2"/>
<polygon points="902.2,506.7 905.1,537.1 916.3,551.4 922,550.3 922,507.3"/>
<polygon points="699.7,550.6 700.9,564.6 726.1,555.9 723.8,544.5"/>
<polygon points="687.2,660.9 700.9,689.6 730.4,678.7 735.6,650.2 731.3,644.6 697.5,635.3"/>
<polygon points="898.8,716.3 903.2,722.8 922,726.3 922,691.8 905.6,693.6"/>
<polygon points="484.5,810.6 532,805.7 528.7,787 512.9,778.9 484.5,796.4"/>
<polygon points="702.3,775.4 708.7,787.6 722.6,786.2 721.4,771 709.8,765.8"/>
</g>
<g fill="#e0aa66" stroke="#e0aa66">
<polygon points="851.7,114.6 857.7,136.5 869.4,138.9 882.4,132 878.9,104.7 868.8,100.6"/>
<polygon points="735.4,163.2 739.9,177.6 748.8,173.5 749,154.8 745.4,153.0"/>
<polygon points="532.9,226.2 559.1,237.2 575.9,228.3 577.7,208 561.2,194.8 545.6,198.7"/>
<polygon points="860,334.2 865.6,338.4 876.4,331.6 869.3,315.9 867.1,316.0"/>
<polygon points="742.8,388.1 764.4,382.5 765.4,370.5 753.5,362.9 742.7,371.1"/>
<polygon points="789.4,630.9 804.9,640.9 821.3,623.2 818.4,612.3 788.5,617.5"/>
<polygon points="552.9,670.4 561.5,707.6 605.6,704 610.8,668.8 583.7,651.4"/>
<polygon points="822,707.8 824.1,726.5 838.1,735.2 843.8,715.5 841.3,711.5"/>
</g>
</g>
<g font-family="Liberation Sans,sans-serif" font-size="9" font-weight="bold"><path d="M19.100 806V787.500" stroke="#1c1cc8" stroke-width="1.300"/><path d="M19.100 806H37.500" stroke="#c81c1c" stroke-width="1.300"/><text x="18.500" y="787" fill="#1c1cc8">z</text><text x="37.500" y="806.500" fill="#c81c1c">x</text><text x="11.500" y="806.500" fill="#1e9a1e">y</text></g>
</svg>
</div>
<div class="abs" style="left:0;top:977px;width:1412px;height:103px;background:#444"></div>
<!-- left viewport controls -->
<div class="abs" style="left:10px;top:903px;width:18px;height:19px;background:#4a4a4a;border:1px solid #3a3a3a;border-radius:2px"></div>
<svg class="abs" style="left:10px;top:903px" width="18" height="19" viewBox="0 0 18 19"><path d="M6.500 5.500l6 4-6 4z" fill="#e8e8e8"/></svg>
<div class="abs" style="left:4px;top:932px;width:35px;height:43px;background:linear-gradient(#5a6b86,#4c7fd0 85%,#3f78d6);border-radius:3px"></div>
<div class="abs" style="left:7px;top:941px;width:29px;height:26px;background:linear-gradient(#707b8a,#5d6675);border:1px solid #3b4350;border-radius:2px"></div>
<!-- time slider -->
<div class="abs" style="left:9px;top:982px;width:14px;height:15px;background:#626262;border-radius:2px;color:#ddd;font-size:10px;line-height:15px;text-align:center">&lt;</div>
<div class="abs" style="left:25px;top:982px;width:119px;height:15px;background:#626262;border-radius:2px;color:#e0e0e0;font-size:10px;line-height:15px;text-align:center">0 / 100</div>
<div class="abs" style="left:146px;top:982px;width:14px;height:15px;background:#626262;border-radius:2px;color:#ddd;font-size:10px;line-height:15px;text-align:center">&gt;</div>
<div class="abs" style="left:2px;top:982px;width:3px;height:42px;background:repeating-linear-gradient(#666 0 1px,#3a3a3a 1px 2px)"></div>
<!-- trackbar -->
<div class="abs" style="left:9px;top:1001px;width:1403px;height:2px;background:#2b2b2b"></div>
<div class="abs" style="left:57px;top:1001px;width:1355px;height:25px;background:#2b2b2b"></div>
<svg class="abs" style="left:0;top:1001px" width="1412" height="25" viewBox="0 1001 1412 25" font-family="Liberation Sans,sans-serif" font-size="10.500" fill="#d0d0d0">
<rect x="61" y="1003" width="7" height="22.500" fill="#8c7d22"/><path d="M62.500 1004v8M64.500 1004v8M66.500 1004v8" stroke="#a09032" stroke-width="0.800"/>
<text x="64.500" y="1022.500" text-anchor="middle" fill="#d8c840">0</text>
<path d="M64.5 1002v11M82.5 1002v11M101.5 1002v11M119.5 1002v11M137.5 1002v11M156.5 1002v11M174.5 1002v11M192.5 1002v11M211.5 1002v11M229.5 1002v11M247.5 1002v11M266.5 1002v11M284.5 1002v11M302.5 1002v11M321.5 1002v11M339.5 1002v11M357.5 1002v11M376.5 1002v11M394.5 1002v11M412.5 1002v11M431.5 1002v11M449.5 1002v11M467.5 1002v11M486.5 1002v11M504.5 1002v11M522.5 1002v11M541.5 1002v11M559.5 1002v11M577.5 1002v11M596.5 1002v11M614.5 1002v11M632.5 1002v11M651.5 1002v11M669.5 1002v11M687.5 1002v11M706.5 1002v11M724.5 1002v11M742.5 1002v11M761.5 1002v11M779.5 1002v11M797.5 1002v11M816.5 1002v11M834.5 1002v11M852.5 1002v11M871.5 1002v11M889.5 1002v11M907.5 1002v11M926.5 1002v11M944.5 1002v11M962.5 1002v11M981.5 1002v11M999.5 1002v11M1017.5 1002v11M1036.5 1002v11M1054.5 1002v11M1072.5 1002v11M1091.5 1002v11M1109.5 1002v11M1127.5 1002v11M1146.5 1002v11M1164.5 1002v11M1182.5 1002v11M1201.5 1002v11M1219.5 1002v11M1237.5 1002v11M1256.5 1002v11M1274.5 1002v11M1292.5 1002v11M1311.5 1002v11M1329.5 1002v11M1347.5 1002v11M1366.5 1002v11M1384.5 1002v11M1402.5 1002v11" stroke="#777" stroke-width="1"/><path d="M64.5 1023v3M156.5 1023v3M247.5 1023v3M339.5 1023v3M431.5 1023v3M522.5 1023v3M614.5 1023v3M706.5 1023v3M797.5 1023v3M889.5 1023v3M981.5 1023v3M1072.5 1023v3M1164.5 1023v3M1256.5 1023v3M1347.5 1023v3" stroke="#777" stroke-width="1"/>
<text x="156.5" y="1022.500" text-anchor="middle">5</text><text x="247.5" y="1022.500" text-anchor="middle">10</text><text x="339.5" y="1022.500" text-anchor="middle">15</text><text x="431.5" y="1022.500" text-anchor="middle">20</text><text x="522.5" y="1022.500" text-anchor="middle">25</text><text x="614.5" y="1022.500" text-anchor="middle">30</text><text x="706.5" y="1022.500" text-anchor="middle">35</text><text x="797.5" y="1022.500" text-anchor="middle">40</text><text x="889.5" y="1022.500" text-anchor="middle">45</text><text x="981.5" y="1022.500" text-anchor="middle">50</text><text x="1072.5" y="1022.500" text-anchor="middle">55</text><text x="1164.5" y="1022.500" text-anchor="middle">60</text><text x="1256.5" y="1022.500" text-anchor="middle">65</text><text x="1347.5" y="1022.500" text-anchor="middle">70</text>
<path d="M22 1009.500h2.500M22 1011.500h2.500M22 1013.500h2.500M22 1015.500h2.500M22 1017.500h2.500" stroke="#bbb" stroke-width="0.800"/>
<path d="M26.500 1013.500c1-4 3-4 4.200 0s3.200 4 4.200 0" stroke="#3cc4c4" stroke-width="1.300" fill="none"/>
</svg>
<!-- status -->
<div class="abs" style="left:3px;top:1030px;width:97px;height:47px;background:#3a3a3a;border:1px solid #2e2e2e"></div>
<div class="abs" style="left:4px;top:1031px;width:94px;height:20px;background:#dfc3c3;border:1px solid #efe0e0"></div>
<div class="abs" style="left:4px;top:1053px;width:94px;height:22px;background:#fff;border:1px solid #cfcfcf;font-family:'Liberation Mono','DejaVu Sans Mono',monospace;font-size:10.800px;line-height:15px;color:#7c7c7c;padding-left:2px;white-space:nowrap;overflow:hidden;letter-spacing:-0.15px">MAXScript Mini</div>
<div class="abs" style="left:102px;top:1030px;width:1px;height:47px;background:#333"></div>
<div class="abs" style="left:106px;top:1035px;font-size:10.500px;color:#e6e6e6;white-space:nowrap;letter-spacing:-0.35px">None Selected</div>
<div class="abs" style="left:106px;top:1059px;font-size:10.500px;color:#e6e6e6;white-space:nowrap;letter-spacing:-0.3px">Click or click-and-drag to select objects</div>
<svg class="abs" style="left:1125px;top:1030px" width="90" height="24" viewBox="1125 1030 90 24" fill="none">
<g stroke="#5e5e5e" stroke-width="1.300"><path d="M1130 1038v-3h3M1141 1035h3v3M1144 1045v3h-3M1133 1048h-3v-3"/><rect x="1133.500" y="1038.500" width="7" height="6"/></g>
<g stroke="#5e5e5e" stroke-width="1.300"><path d="M1159.500 1040v-2a2.500 2.500 0 0 1 5 0v2"/><rect x="1158" y="1040" width="8" height="7" rx="1"/><path d="M1162 1042v3"/></g>
<rect x="1182" y="1036" width="11" height="11" stroke="#e8e8e8" stroke-width="1.200"/><path d="M1187.500 1037.500l4 4-4 4-4-4z" fill="#e8e8e8"/><circle cx="1187.500" cy="1041.500" r="1.300" fill="#444"/>
</svg>
<span class="abs" style="left:1202px;top:1035px;font-size:10.500px;color:#e0e0e0">X:</span>
<div class="abs" style="left:1216px;top:1034px;width:55px;height:16px;background:#595959;color:#8e8e8e;font-size:10.500px;line-height:16px;padding-left:2px;white-space:nowrap;overflow:hidden">295.093m</div>
<span class="abs" style="left:1283px;top:1035px;font-size:10.500px;color:#e0e0e0">Y:</span>
<div class="abs" style="left:1296px;top:1034px;width:55px;height:16px;background:#595959;color:#8e8e8e;font-size:10.500px;line-height:16px;padding-left:2px;white-space:nowrap;overflow:hidden">341.859m</div>
<span class="abs" style="left:1363px;top:1035px;font-size:10.500px;color:#e0e0e0">Z:</span>
<div class="abs" style="left:1376px;top:1034px;width:36px;height:16px;background:#595959;color:#8e8e8e;font-size:10.500px;line-height:16px;padding-left:2px;white-space:nowrap;overflow:hidden">0.0m</div>
<div class="abs" style="left:1306px;top:1057px;width:1px;height:18px;background:#2a2a2a"></div>
<div class="abs" style="left:1312px;top:1056px;width:19px;height:20px;background:#5e5e5e;border-radius:3px"></div>
<svg class="abs" style="left:1312px;top:1056px" width="19" height="20" viewBox="0 0 19 20"><path d="M9.500 4.500c2 1 3.500 1.500 5 1.500 0 4.500-1.500 7.500-5 9.500-3.500-2-5-5-5-9.500 1.500 0 3-0.500 5-1.500z" fill="#e8e8e8"/><path d="M9.500 4.500v5.500h-4.800c-.2-1.200-.2-2.500-.2-4 1.500 0 3-.5 5-1.500zM9.500 10h4.800c-.8 2.500-2.300 4.200-4.800 5.500z" fill="#333"/></svg>
<span class="abs" style="left:1336px;top:1059px;font-size:10.500px;color:#e6e6e6;letter-spacing:-0.1px">Enabled:</span>
<div class="abs" style="left:1379px;top:1061px;width:9px;height:9px;border-radius:5px;background:#3fd13f"></div>
<div class="abs" style="left:1393px;top:1056px;width:19px;height:20px;background:#5e5e5e;border-radius:3px"></div>
<svg class="abs" style="left:1393px;top:1056px" width="19" height="20" viewBox="0 0 19 20"><circle cx="9.500" cy="10" r="6" fill="#f2f2f2"/><text x="9.500" y="13.500" text-anchor="middle" font-family="Liberation Sans,sans-serif" font-weight="bold" font-size="9.500" fill="#222">0</text></svg>
<div class="abs" style="left:46px;top:1078px;width:334px;height:2px;background:#e8e8e8"></div>
<div class="abs" style="left:668px;top:1078px;width:48px;height:2px;background:#5a6a5a"></div>

</div>
<div id="side">
<div class="abs" style="left:0;top:84px;width:508px;text-align:center;font-family:'Liberation Sans','Loma',sans-serif;font-size:61px;line-height:100px;white-space:nowrap;transform:scaleX(0.865);transform-origin:220px 0">การสร้างโมเดล</div>
<div class="abs" style="left:0;top:202px;width:508px;text-align:center;font-size:100px;line-height:120px;white-space:nowrap;letter-spacing:-1.100px;text-indent:2px">WALL-015</div>
<svg class="abs" style="left:50px;top:450px" width="400" height="160" viewBox="1462 450 400 160">
<polygon points="1484.500,460.400 1548.900,460.400 1521.500,487 1472.600,487.800" fill="#047e86"/>
<polygon points="1548.900,460.400 1583.800,530 1520,489" fill="#036b71"/>
<polygon points="1472.600,488 1521,488.500 1507.400,501.500" fill="#1a3637"/>
<polygon points="1520,488.500 1583.800,530 1507.400,501.500" fill="#0f1d1d"/>
<polygon points="1507.400,501.900 1520,507 1520,553.800 1506,559.700 1474.800,530.800" fill="#04828a"/>
<polygon points="1520,507 1583.800,530.400 1520,553.800" fill="#035a60"/>
<polygon points="1506,559.700 1583.800,530.800 1520,572" fill="#0f1d1d"/>
<polygon points="1472.600,572.500 1506,559.700 1520,572" fill="#1a3637"/>
<polygon points="1472.600,572.700 1520,571.800 1548.900,599.700 1484.500,599.700" fill="#03787f"/>
<polygon points="1520,571.800 1583.800,530.800 1548.900,599.700" fill="#034b4f"/>
<rect x="1597.700" y="462" width="1.800" height="136" fill="#a4a4a4"/>
<text x="1615" y="521" font-family="Liberation Sans,sans-serif" font-size="50" fill="#ececec" textLength="232" lengthAdjust="spacingAndGlyphs" stroke="#000" stroke-width="1.100">AUTODESK</text>
<text x="1615.500" y="568.300" font-family="Liberation Sans,sans-serif" font-size="51.500" font-weight="bold" fill="#fff" textLength="237" lengthAdjust="spacingAndGlyphs" stroke="#000" stroke-width="0.600">3DS MAX</text>
</svg>
<svg class="abs" style="left:140px;top:690px" width="230" height="230" viewBox="1552 690 230 230" fill="none" stroke="#fff">
<g stroke-width="0.800" stroke="#b4b4b4">
<path d="M1569.500 752.500V857.500M1615 726.250V883.750M1708 726.250V883.750"/>
<path d="M1569.500 752.500L1660.500 700M1569.500 805L1708 726.250M1569.500 857.500L1755.500 752.500M1615 883.750L1755.500 805"/>
<path d="M1615 726.250L1755.500 805M1660.500 805L1755.500 857.500M1569.500 805L1708 883.750"/>
</g>
<g stroke-width="5" stroke-linejoin="round" stroke-linecap="round">
<path d="M1660.500 908.500L1660.500 701L1755 753L1755 857L1660.500 908.500L1571 858"/>
<path d="M1571 754L1659 804.500M1617 832L1659 856"/>
</g>
</svg>
<div class="abs" style="left:0;top:937px;width:508px;text-align:center;font-size:25px;line-height:32px;letter-spacing:0.900px;white-space:nowrap;font-weight:normal;color:#f4f4f4;-webkit-text-stroke:0.700px #000">3D EASY STUDIO</div>
<div class="abs" style="left:0;top:1016px;width:508px;text-align:center;font-size:32px;line-height:40px;white-space:nowrap;letter-spacing:-0.25px;text-indent:-3px">WWW.3DEASYSTUDIO.COM</div>

</div>
</body>
</html>
